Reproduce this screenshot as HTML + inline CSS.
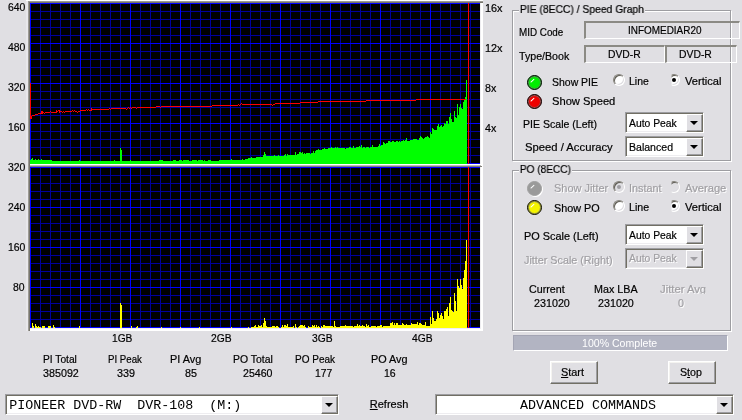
<!DOCTYPE html>
<html><head><meta charset="utf-8"><title>PIE / PO Scan</title>
<style>
html,body{margin:0;padding:0;}
body{width:742px;height:420px;overflow:hidden;background:#e0dfe3;position:relative;font-family:"Liberation Sans",sans-serif;font-size:11px;color:#000;}
.graph{position:absolute;left:0;top:0;}
.txt{position:absolute;left:0;top:0;width:742px;height:420px;will-change:transform;}
.t{-webkit-text-stroke:0.2px currentColor;position:absolute;white-space:nowrap;line-height:13px;height:13px;transform-origin:0 0;font-size:11px;}
.t.dis{color:#a09fa3;text-shadow:1px 1px 0 #fff;}
.m{position:absolute;white-space:pre;font-family:"Liberation Mono",monospace;font-size:13.33px;line-height:14px;}
.gb{position:absolute;border:1px solid #9d9da1;box-shadow:1px 1px 0 #fff, inset 1px 1px 0 #fff;box-sizing:border-box;}
.field{position:absolute;box-sizing:border-box;border-top:2px solid #8b8a84;border-left:2px solid #8b8a84;border-bottom:1px solid #fff;border-right:1px solid #fff;}
.combo{position:absolute;box-sizing:border-box;background:#fff;border:1px solid;border-color:#9d9da1 #fff #fff #9d9da1;box-shadow:inset 1px 1px 0 #716f64, inset -1px -1px 0 #eeedf0;padding:1px;}
.combo.dis{background:#e0dfe3;}
.cbtn{position:absolute;right:0;top:1px;bottom:0;width:17px;background:#e0dfe3;box-sizing:border-box;border:1px solid;border-color:#fff #716f64 #716f64 #fff;box-shadow:inset -1px -1px 0 #9d9da1;}
.cbtn i{position:absolute;left:3.4px;top:6px;width:0;height:0;border-left:4px solid transparent;border-right:4px solid transparent;border-top:4.4px solid #000;}
.combo.dis .cbtn i{border-top-color:#a09fa3;}
.btn{position:absolute;box-sizing:border-box;background:#e0dfe3;border:1px solid;border-color:#fff #716f64 #716f64 #fff;box-shadow:inset -1px -1px 0 #9d9da1, inset 1px 1px 0 #f4f3f0;}
.led{position:absolute;width:15px;height:15px;border-radius:50%;box-sizing:border-box;border:1.5px solid #000;box-shadow:inset 0 0 0 1px rgba(110,110,110,.8);}
.led i{position:absolute;left:1.7px;top:4.6px;width:5.4px;height:1.4px;background:#fff;transform:rotate(-42deg);transform-origin:50% 50%;border-radius:1px;}
.led.ledd{border-color:#a0a0a0;box-shadow:1px 1px 0 #fff;}
.radio{position:absolute;width:12px;height:12px;border-radius:50%;box-sizing:border-box;background:#fff;border:1px solid;border-color:#85837c #fff #fff #85837c;box-shadow:inset 1px 1px 0 #5f5d55, inset -1px -1px 0 #dddce0;}
.radio.rdis{background:#e0dfe3;}
.radio i{position:absolute;left:3px;top:3px;width:4px;height:4px;border-radius:50%;background:#000;}
.radio.rdis i{background:#a09fa3;}
.radio.rclip{clip-path:inset(0 0 0 3.6px);}
.prog{position:absolute;left:513px;top:335px;width:215px;height:16px;background:#b2b4c2;box-sizing:border-box;border-bottom:1px solid #fff;border-right:1px solid #fff;border-top:1px solid #a4a5b4;border-left:1px solid #a4a5b4;}
u{text-decoration:underline;text-underline-offset:1px;}
</style></head><body>
<svg class="graph" width="742" height="335" viewBox="0 0 742 335" shape-rendering="crispEdges"><rect x="26" y="0" width="457" height="1" fill="#fff"/><rect x="26" y="1" width="2" height="330" fill="#e8e7eb"/><rect x="28" y="1" width="455" height="330" fill="#9c9a94"/><rect x="29" y="2" width="454" height="329" fill="#77756c"/><rect x="30" y="3" width="453" height="328" fill="#fff"/><rect x="30" y="3" width="451" height="326" fill="#efeef1"/><rect x="30" y="3" width="450" height="161" fill="#000"/><rect x="30" y="164" width="451" height="1" fill="#fff"/><rect x="30" y="165" width="451" height="1" fill="#bdbcba"/><rect x="30" y="166" width="452" height="1" fill="#807e78"/><rect x="30" y="167" width="450" height="161" fill="#000"/><path d="M40.5 3V164M50.5 3V164M60.5 3V164M70.5 3V164M90.5 3V164M100.5 3V164M110.5 3V164M120.5 3V164M140.5 3V164M150.5 3V164M160.5 3V164M170.5 3V164M190.5 3V164M200.5 3V164M210.5 3V164M220.5 3V164M240.5 3V164M250.5 3V164M260.5 3V164M270.5 3V164M290.5 3V164M300.5 3V164M310.5 3V164M320.5 3V164M340.5 3V164M350.5 3V164M360.5 3V164M370.5 3V164M390.5 3V164M400.5 3V164M410.5 3V164M420.5 3V164M440.5 3V164M450.5 3V164M460.5 3V164M470.5 3V164M30 11.5H480M30 19.5H480M30 27.5H480M30 35.5H480M30 51.5H480M30 59.5H480M30 67.5H480M30 75.5H480M30 91.5H480M30 99.5H480M30 107.5H480M30 115.5H480M30 131.5H480M30 139.5H480M30 147.5H480M30 155.5H480" stroke="#00009c" stroke-width="1" fill="none"/><path d="M30.5 3V164M80.5 3V164M130.5 3V164M180.5 3V164M230.5 3V164M280.5 3V164M330.5 3V164M380.5 3V164M430.5 3V164M30 3.5H480M30 43.5H480M30 83.5H480M30 123.5H480M30 163.5H480" stroke="#0000ff" stroke-width="1" fill="none"/><path d="M40.5 167V328M50.5 167V328M60.5 167V328M70.5 167V328M90.5 167V328M100.5 167V328M110.5 167V328M120.5 167V328M140.5 167V328M150.5 167V328M160.5 167V328M170.5 167V328M190.5 167V328M200.5 167V328M210.5 167V328M220.5 167V328M240.5 167V328M250.5 167V328M260.5 167V328M270.5 167V328M290.5 167V328M300.5 167V328M310.5 167V328M320.5 167V328M340.5 167V328M350.5 167V328M360.5 167V328M370.5 167V328M390.5 167V328M400.5 167V328M410.5 167V328M420.5 167V328M440.5 167V328M450.5 167V328M460.5 167V328M470.5 167V328M30 175.5H480M30 183.5H480M30 191.5H480M30 199.5H480M30 215.5H480M30 223.5H480M30 231.5H480M30 239.5H480M30 255.5H480M30 263.5H480M30 271.5H480M30 279.5H480M30 295.5H480M30 303.5H480M30 311.5H480M30 319.5H480" stroke="#00009c" stroke-width="1" fill="none"/><path d="M30.5 167V328M80.5 167V328M130.5 167V328M180.5 167V328M230.5 167V328M280.5 167V328M330.5 167V328M380.5 167V328M430.5 167V328M30 167.5H480M30 207.5H480M30 247.5H480M30 287.5H480M30 327.5H480" stroke="#0000ff" stroke-width="1" fill="none"/><path d="M30.5 164V160M31.5 164V159M32.5 164V158M33.5 164V160M34.5 164V160M35.5 164V159M36.5 164V160M37.5 164V160M38.5 164V159M39.5 164V160M40.5 164V160M41.5 164V159M42.5 164V160M43.5 164V160M44.5 164V160M45.5 164V160M46.5 164V160M47.5 164V160M48.5 164V160M49.5 164V160M50.5 164V160M51.5 164V160M52.5 164V161M53.5 164V161M54.5 164V161M55.5 164V161M56.5 164V161M57.5 164V161M58.5 164V161M59.5 164V161M60.5 164V161M61.5 164V161M62.5 164V161M63.5 164V161M64.5 164V161M65.5 164V161M66.5 164V161M67.5 164V161M68.5 164V161M69.5 164V161M70.5 164V161M71.5 164V161M72.5 164V161M73.5 164V161M74.5 164V161M75.5 164V161M76.5 164V161M77.5 164V161M78.5 164V161M79.5 164V160M80.5 164V161M81.5 164V161M82.5 164V161M83.5 164V161M84.5 164V161M85.5 164V161M86.5 164V161M87.5 164V161M88.5 164V161M89.5 164V161M90.5 164V161M91.5 164V161M92.5 164V161M93.5 164V161M94.5 164V161M95.5 164V161M96.5 164V161M97.5 164V161M98.5 164V161M99.5 164V161M100.5 164V161M101.5 164V161M102.5 164V161M103.5 164V161M104.5 164V161M105.5 164V161M106.5 164V161M107.5 164V161M108.5 164V161M109.5 164V161M110.5 164V161M111.5 164V161M112.5 164V161M113.5 164V161M114.5 164V160M115.5 164V161M116.5 164V161M117.5 164V161M118.5 164V161M119.5 164V161M120.5 164V148M121.5 164V150M122.5 164V161M123.5 164V161M124.5 164V161M125.5 164V161M126.5 164V161M127.5 164V161M128.5 164V161M129.5 164V161M130.5 164V160M131.5 164V161M132.5 164V161M133.5 164V161M134.5 164V161M135.5 164V161M136.5 164V161M137.5 164V161M138.5 164V161M139.5 164V161M140.5 164V161M141.5 164V161M142.5 164V161M143.5 164V161M144.5 164V161M145.5 164V161M146.5 164V161M147.5 164V161M148.5 164V161M149.5 164V161M150.5 164V161M151.5 164V161M152.5 164V161M153.5 164V161M154.5 164V161M155.5 164V161M156.5 164V161M157.5 164V161M158.5 164V161M159.5 164V160M160.5 164V160M161.5 164V160M162.5 164V160M163.5 164V161M164.5 164V161M165.5 164V161M166.5 164V161M167.5 164V161M168.5 164V161M169.5 164V161M170.5 164V161M171.5 164V161M172.5 164V161M173.5 164V160M174.5 164V160M175.5 164V160M176.5 164V161M177.5 164V161M178.5 164V161M179.5 164V160M180.5 164V160M181.5 164V160M182.5 164V161M183.5 164V160M184.5 164V160M185.5 164V160M186.5 164V160M187.5 164V160M188.5 164V160M189.5 164V161M190.5 164V161M191.5 164V161M192.5 164V160M193.5 164V160M194.5 164V160M195.5 164V160M196.5 164V160M197.5 164V161M198.5 164V160M199.5 164V160M200.5 164V160M201.5 164V160M202.5 164V160M203.5 164V161M204.5 164V160M205.5 164V161M206.5 164V161M207.5 164V161M208.5 164V160M209.5 164V160M210.5 164V160M211.5 164V161M212.5 164V161M213.5 164V161M214.5 164V161M215.5 164V161M216.5 164V161M217.5 164V161M218.5 164V161M219.5 164V160M220.5 164V160M221.5 164V160M222.5 164V160M223.5 164V160M224.5 164V160M225.5 164V160M226.5 164V160M227.5 164V160M228.5 164V160M229.5 164V160M230.5 164V160M231.5 164V159M232.5 164V160M233.5 164V160M234.5 164V160M235.5 164V160M236.5 164V160M237.5 164V160M238.5 164V160M239.5 164V160M240.5 164V160M241.5 164V160M242.5 164V159M243.5 164V160M244.5 164V160M245.5 164V159M246.5 164V159M247.5 164V159M248.5 164V158M249.5 164V158M250.5 164V158M251.5 164V157M252.5 164V158M253.5 164V158M254.5 164V158M255.5 164V158M256.5 164V157M257.5 164V157M258.5 164V157M259.5 164V157M260.5 164V157M261.5 164V157M262.5 164V157M263.5 164V155M264.5 164V152M265.5 164V154M266.5 164V156M267.5 164V156M268.5 164V156M269.5 164V156M270.5 164V156M271.5 164V156M272.5 164V156M273.5 164V156M274.5 164V155M275.5 164V156M276.5 164V156M277.5 164V156M278.5 164V155M279.5 164V156M280.5 164V156M281.5 164V156M282.5 164V156M283.5 164V156M284.5 164V155M285.5 164V154M286.5 164V156M287.5 164V154M288.5 164V155M289.5 164V155M290.5 164V155M291.5 164V155M292.5 164V155M293.5 164V155M294.5 164V155M295.5 164V152M296.5 164V155M297.5 164V154M298.5 164V154M299.5 164V152M300.5 164V152M301.5 164V153M302.5 164V152M303.5 164V154M304.5 164V153M305.5 164V154M306.5 164V153M307.5 164V153M308.5 164V153M309.5 164V153M310.5 164V154M311.5 164V153M312.5 164V153M313.5 164V151M314.5 164V153M315.5 164V151M316.5 164V150M317.5 164V150M318.5 164V149M319.5 164V150M320.5 164V150M321.5 164V150M322.5 164V149M323.5 164V149M324.5 164V148M325.5 164V149M326.5 164V149M327.5 164V149M328.5 164V148M329.5 164V148M330.5 164V148M331.5 164V147M332.5 164V148M333.5 164V148M334.5 164V148M335.5 164V147M336.5 164V148M337.5 164V147M338.5 164V148M339.5 164V148M340.5 164V148M341.5 164V148M342.5 164V148M343.5 164V148M344.5 164V148M345.5 164V149M346.5 164V148M347.5 164V148M348.5 164V148M349.5 164V147M350.5 164V147M351.5 164V148M352.5 164V148M353.5 164V146M354.5 164V148M355.5 164V148M356.5 164V147M357.5 164V147M358.5 164V147M359.5 164V146M360.5 164V147M361.5 164V145M362.5 164V148M363.5 164V147M364.5 164V147M365.5 164V148M366.5 164V147M367.5 164V147M368.5 164V147M369.5 164V148M370.5 164V147M371.5 164V147M372.5 164V145M373.5 164V147M374.5 164V147M375.5 164V147M376.5 164V147M377.5 164V147M378.5 164V146M379.5 164V144M380.5 164V146M381.5 164V145M382.5 164V145M383.5 164V142M384.5 164V143M385.5 164V144M386.5 164V143M387.5 164V143M388.5 164V141M389.5 164V141M390.5 164V142M391.5 164V142M392.5 164V141M393.5 164V141M394.5 164V142M395.5 164V142M396.5 164V141M397.5 164V141M398.5 164V142M399.5 164V141M400.5 164V142M401.5 164V141M402.5 164V141M403.5 164V140M404.5 164V141M405.5 164V140M406.5 164V138M407.5 164V141M408.5 164V141M409.5 164V141M410.5 164V140M411.5 164V140M412.5 164V140M413.5 164V139M414.5 164V139M415.5 164V139M416.5 164V139M417.5 164V140M418.5 164V140M419.5 164V138M420.5 164V136M421.5 164V137M422.5 164V138M423.5 164V139M424.5 164V138M425.5 164V137M426.5 164V137M427.5 164V136M428.5 164V137M429.5 164V138M430.5 164V132M431.5 164V134M432.5 164V128M433.5 164V129M434.5 164V130M435.5 164V130M436.5 164V130M437.5 164V126M438.5 164V124M439.5 164V127M440.5 164V126M441.5 164V125M442.5 164V127M443.5 164V126M444.5 164V123M445.5 164V124M446.5 164V121M447.5 164V121M448.5 164V124M449.5 164V117M450.5 164V113M451.5 164V119M452.5 164V122M453.5 164V122M454.5 164V111M455.5 164V117M456.5 164V118M457.5 164V104M458.5 164V115M459.5 164V107M460.5 164V104M461.5 164V108M462.5 164V109M463.5 164V102M464.5 164V100M465.5 164V97M466.5 164V80" stroke="#00ff00" stroke-width="1" fill="none"/><path d="M32.5 328V323M33.5 328V326M35.5 328V324M36.5 328V326M37.5 328V327M38.5 328V326M39.5 328V327M40.5 328V327M42.5 328V326M43.5 328V326M44.5 328V326M48.5 328V326M49.5 328V326M50.5 328V326M53.5 328V325M54.5 328V327M79.5 328V326M120.5 328V303M121.5 328V305M131.5 328V326M136.5 328V327M137.5 328V326M161.5 328V327M180.5 328V327M199.5 328V327M231.5 328V327M248.5 328V327M251.5 328V327M252.5 328V327M253.5 328V327M254.5 328V326M255.5 328V325M256.5 328V327M257.5 328V327M258.5 328V325M259.5 328V326M260.5 328V326M261.5 328V325M262.5 328V327M263.5 328V323M264.5 328V318M265.5 328V321M266.5 328V326M267.5 328V327M268.5 328V327M269.5 328V327M270.5 328V327M271.5 328V327M272.5 328V326M273.5 328V326M274.5 328V326M275.5 328V327M276.5 328V326M277.5 328V326M278.5 328V327M281.5 328V327M282.5 328V325M283.5 328V327M284.5 328V325M285.5 328V325M286.5 328V326M287.5 328V324M288.5 328V327M289.5 328V327M290.5 328V327M291.5 328V327M292.5 328V327M293.5 328V326M295.5 328V324M296.5 328V327M298.5 328V327M299.5 328V326M300.5 328V325M301.5 328V325M302.5 328V325M303.5 328V326M304.5 328V325M305.5 328V327M308.5 328V326M309.5 328V327M310.5 328V327M311.5 328V327M312.5 328V325M313.5 328V326M314.5 328V325M315.5 328V327M316.5 328V325M317.5 328V327M318.5 328V326M319.5 328V327M321.5 328V326M322.5 328V327M323.5 328V325M324.5 328V325M325.5 328V326M326.5 328V326M327.5 328V326M328.5 328V326M329.5 328V326M330.5 328V326M331.5 328V326M332.5 328V326M333.5 328V327M334.5 328V321M335.5 328V326M336.5 328V327M337.5 328V327M338.5 328V327M339.5 328V327M340.5 328V326M341.5 328V326M342.5 328V326M343.5 328V326M344.5 328V326M345.5 328V325M346.5 328V326M347.5 328V326M348.5 328V326M349.5 328V326M350.5 328V326M351.5 328V326M352.5 328V326M353.5 328V327M354.5 328V326M355.5 328V326M356.5 328V326M357.5 328V324M358.5 328V326M359.5 328V325M360.5 328V326M361.5 328V326M362.5 328V325M363.5 328V326M364.5 328V326M365.5 328V327M366.5 328V324M367.5 328V326M368.5 328V325M369.5 328V327M370.5 328V327M371.5 328V326M372.5 328V326M373.5 328V326M374.5 328V326M375.5 328V326M376.5 328V327M377.5 328V326M378.5 328V326M379.5 328V326M380.5 328V325M381.5 328V325M382.5 328V327M383.5 328V326M384.5 328V326M385.5 328V326M386.5 328V326M387.5 328V326M388.5 328V326M389.5 328V326M390.5 328V323M391.5 328V323M392.5 328V322M393.5 328V325M394.5 328V323M395.5 328V325M396.5 328V323M397.5 328V323M398.5 328V325M399.5 328V325M400.5 328V325M401.5 328V325M402.5 328V323M403.5 328V324M404.5 328V325M405.5 328V325M406.5 328V324M407.5 328V325M408.5 328V325M409.5 328V325M410.5 328V325M411.5 328V323M412.5 328V324M413.5 328V324M414.5 328V324M415.5 328V324M416.5 328V324M417.5 328V322M418.5 328V325M419.5 328V323M420.5 328V323M421.5 328V324M422.5 328V325M423.5 328V325M424.5 328V325M425.5 328V322M426.5 328V326M427.5 328V326M428.5 328V326M429.5 328V326M430.5 328V317M431.5 328V324M432.5 328V311M433.5 328V318M434.5 328V321M435.5 328V321M436.5 328V319M437.5 328V311M438.5 328V313M439.5 328V318M440.5 328V315M441.5 328V313M442.5 328V316M443.5 328V319M444.5 328V311M445.5 328V311M446.5 328V309M447.5 328V307M448.5 328V316M449.5 328V303M450.5 328V297M451.5 328V310M452.5 328V311M453.5 328V312M454.5 328V293M455.5 328V301M456.5 328V311M457.5 328V279M458.5 328V286M459.5 328V288M460.5 328V279M461.5 328V285M462.5 328V289M463.5 328V278M464.5 328V270M465.5 328V261M466.5 328V240" stroke="#ffff00" stroke-width="1" fill="none"/><path d="M30.5 83V119" stroke="#ff0000" stroke-width="1"/><path d="M30 118.5h1M31.5 116V119M31 116.5h1M32 115.5h1M33 115.5h1M34 115.5h1M35 114.5h1M36 114.5h1M37 114.5h1M38 113.5h1M39 113.5h1M40 113.5h1M41.5 111V114M41 111.5h1M42.5 111V114M42 113.5h1M43 112.5h1M44 113.5h1M45 112.5h1M46 112.5h1M47 112.5h1M48 112.5h1M49 112.5h1M50 111.5h1M51 112.5h1M52 112.5h1M53 112.5h1M54 112.5h1M55 112.5h1M56.5 110V113M56 110.5h1M57 111.5h1M58 110.5h1M59.5 110V113M59 112.5h1M60 111.5h1M61 111.5h1M62 112.5h1M63 111.5h1M64 112.5h1M65 111.5h1M66 111.5h1M67 111.5h1M68 111.5h1M69 111.5h1M70 111.5h1M71 111.5h1M72 110.5h1M73 111.5h1M74 110.5h1M75 111.5h1M76 111.5h1M77 112.5h1M78 111.5h1M79 111.5h1M80 110.5h1M81 110.5h1M82 110.5h1M83 110.5h1M84 110.5h1M85 110.5h1M86 109.5h1M87 110.5h1M88 109.5h1M89 110.5h1M90 110.5h1M91.5 108V111M91 108.5h1M92 109.5h1M93 109.5h1M94 109.5h1M95 109.5h1M96 109.5h1M97 109.5h1M98 109.5h1M99 109.5h1M100 109.5h1M101 109.5h1M102 109.5h1M103 109.5h1M104 109.5h1M105 109.5h1M106 109.5h1M107 109.5h1M108 109.5h1M109 108.5h1M110 109.5h1M111 108.5h1M112 108.5h1M113 108.5h1M114 108.5h1M115 108.5h1M116 108.5h1M117 108.5h1M118 108.5h1M119 108.5h1M120 108.5h1M121 108.5h1M122 108.5h1M123 108.5h1M124 108.5h1M125 108.5h1M126 109.5h1M127 108.5h1M128 107.5h1M129 108.5h1M130 107.5h1M131 108.5h1M132 107.5h1M133 107.5h1M134 107.5h1M135 107.5h1M136 108.5h1M137 107.5h1M138 107.5h1M139 107.5h1M140 107.5h1M141 107.5h1M142 107.5h1M143 107.5h1M144 107.5h1M145 107.5h1M146 107.5h1M147 107.5h1M148 107.5h1M149 107.5h1M150 107.5h1M151 107.5h1M152 107.5h1M153 107.5h1M154 107.5h1M155 107.5h1M156 106.5h1M157 106.5h1M158 106.5h1M159 106.5h1M160 107.5h1M161 106.5h1M162 106.5h1M163 106.5h1M164 106.5h1M165 106.5h1M166 106.5h1M167 106.5h1M168 106.5h1M169 106.5h1M170 106.5h1M171 106.5h1M172 106.5h1M173 106.5h1M174 106.5h1M175 106.5h1M176 106.5h1M177 106.5h1M178 106.5h1M179 106.5h1M180 106.5h1M181 106.5h1M182 106.5h1M183 106.5h1M184 106.5h1M185 106.5h1M186 106.5h1M187 106.5h1M188 106.5h1M189 106.5h1M190 106.5h1M191 106.5h1M192 106.5h1M193 106.5h1M194 106.5h1M195 106.5h1M196 106.5h1M197 106.5h1M198 106.5h1M199 106.5h1M200 106.5h1M201 106.5h1M202 106.5h1M203 106.5h1M204 106.5h1M205 106.5h1M206 106.5h1M207 106.5h1M208 106.5h1M209 106.5h1M210 106.5h1M211 106.5h1M212 105.5h1M213 105.5h1M214 105.5h1M215 105.5h1M216 105.5h1M217 105.5h1M218 105.5h1M219 105.5h1M220 105.5h1M221 105.5h1M222 105.5h1M223 105.5h1M224 105.5h1M225 105.5h1M226 105.5h1M227 105.5h1M228 105.5h1M229 105.5h1M230 105.5h1M231 105.5h1M232 105.5h1M233 105.5h1M234 105.5h1M235 105.5h1M236 105.5h1M237 105.5h1M238 104.5h1M239 105.5h1M240 104.5h1M241 103.5h1M242 104.5h1M243 104.5h1M244 104.5h1M245 104.5h1M246 104.5h1M247 104.5h1M248 104.5h1M249 104.5h1M250 104.5h1M251 104.5h1M252 104.5h1M253 104.5h1M254 104.5h1M255 104.5h1M256 104.5h1M257 104.5h1M258 104.5h1M259 104.5h1M260 104.5h1M261 104.5h1M262 104.5h1M263 104.5h1M264 104.5h1M265 104.5h1M266 104.5h1M267 104.5h1M268 104.5h1M269 104.5h1M270 104.5h1M271 104.5h1M272 105.5h1M273 104.5h1M274 104.5h1M275 103.5h1M276 103.5h1M277 103.5h1M278 103.5h1M279 103.5h1M280 103.5h1M281 103.5h1M282 103.5h1M283 103.5h1M284 103.5h1M285 103.5h1M286 103.5h1M287 103.5h1M288 103.5h1M289 103.5h1M290 103.5h1M291 103.5h1M292 103.5h1M293 103.5h1M294 103.5h1M295 103.5h1M296 103.5h1M297 103.5h1M298 103.5h1M299 103.5h1M300 102.5h1M301 102.5h1M302 102.5h1M303 102.5h1M304 102.5h1M305 102.5h1M306 102.5h1M307 102.5h1M308 102.5h1M309 102.5h1M310 102.5h1M311 102.5h1M312 102.5h1M313 102.5h1M314 102.5h1M315 102.5h1M316 102.5h1M317 102.5h1M318 101.5h1M319 101.5h1M320 101.5h1M321 101.5h1M322 101.5h1M323 101.5h1M324 101.5h1M325 101.5h1M326 101.5h1M327 101.5h1M328 101.5h1M329 101.5h1M330 101.5h1M331 101.5h1M332 101.5h1M333 101.5h1M334 101.5h1M335 101.5h1M336 101.5h1M337 101.5h1M338 101.5h1M339 101.5h1M340 101.5h1M341 101.5h1M342 101.5h1M343 101.5h1M344 101.5h1M345 101.5h1M346 101.5h1M347 101.5h1M348 101.5h1M349 101.5h1M350 101.5h1M351 101.5h1M352 101.5h1M353 101.5h1M354 101.5h1M355 101.5h1M356 101.5h1M357 101.5h1M358 101.5h1M359 101.5h1M360 101.5h1M361 101.5h1M362 101.5h1M363 101.5h1M364 101.5h1M365 101.5h1M366 100.5h1M367 100.5h1M368 100.5h1M369 100.5h1M370 100.5h1M371 100.5h1M372 100.5h1M373 100.5h1M374 100.5h1M375 100.5h1M376 100.5h1M377 100.5h1M378 100.5h1M379 100.5h1M380 100.5h1M381 100.5h1M382 100.5h1M383 100.5h1M384 100.5h1M385 100.5h1M386 100.5h1M387 100.5h1M388 100.5h1M389 100.5h1M390 100.5h1M391 100.5h1M392 100.5h1M393 100.5h1M394 100.5h1M395 100.5h1M396 100.5h1M397 100.5h1M398 100.5h1M399 100.5h1M400 100.5h1M401 100.5h1M402 100.5h1M403 100.5h1M404 100.5h1M405 100.5h1M406 100.5h1M407 100.5h1M408 100.5h1M409 100.5h1M410 100.5h1M411 100.5h1M412 100.5h1M413 100.5h1M414 100.5h1M415 100.5h1M416 99.5h1M417 99.5h1M418 99.5h1M419 99.5h1M420 99.5h1M421 99.5h1M422 99.5h1M423 99.5h1M424 99.5h1M425 99.5h1M426 99.5h1M427 99.5h1M428 99.5h1M429 99.5h1M430 99.5h1M431 99.5h1M432 99.5h1M433 99.5h1M434 99.5h1M435 99.5h1M436 99.5h1M437 99.5h1M438 99.5h1M439 99.5h1M440 99.5h1M441 99.5h1M442 99.5h1M443 99.5h1M444 99.5h1M445 99.5h1M446 99.5h1M447 99.5h1M448 99.5h1M449 99.5h1M450 99.5h1M451 99.5h1M452 99.5h1M453 99.5h1M454 99.5h1M455 99.5h1M456 99.5h1M457 99.5h1M458 99.5h1M459 99.5h1M460 99.5h1M461 99.5h1M462 99.5h1M463 99.5h1M464 99.5h1M465 99.5h1" stroke="#ff0000" stroke-width="1" fill="none"/><path d="M468.5 3V164M468.5 167V328" stroke="#ff0000" stroke-width="1"/></svg>
<div class="gb" style="left:512px;top:10px;width:219px;height:151px"></div>
<div class="gb" style="left:512px;top:170px;width:219px;height:161px"></div>
<div class="field" style="left:584px;top:21px;width:156px;height:18px"></div>
<div class="field" style="left:584px;top:45px;width:81px;height:18px"></div>
<div class="field" style="left:665px;top:45px;width:72px;height:18px"></div>
<div class="prog"></div>
<div class="btn" style="left:550px;top:361px;width:48px;height:23px"></div>
<div class="btn" style="left:668px;top:361px;width:48px;height:23px"></div>
<div class="combo" style="left:625px;top:112px;width:79px;height:21px"><div class="cbtn"><i></i></div></div><div class="combo" style="left:625px;top:136px;width:79px;height:21px"><div class="cbtn"><i></i></div></div><div class="combo" style="left:625px;top:224px;width:79px;height:21px"><div class="cbtn"><i></i></div></div><div class="combo dis" style="left:625px;top:248px;width:79px;height:21px"><div class="cbtn"><i></i></div></div><div class="combo" style="left:5px;top:394px;width:334px;height:21px"><div class="cbtn"><i></i></div></div><div class="combo" style="left:435px;top:394px;width:299px;height:21px"><div class="cbtn"><i></i></div></div><div class="led" style="left:527.0px;top:74.7px;background:#00ee00"><i></i></div><div class="led" style="left:527.0px;top:93.8px;background:#ee0000"><i></i></div><div class="led ledd" style="left:527.0px;top:180.8px;background:#9a9a9a"><i></i></div><div class="led" style="left:527.0px;top:199.9px;background:#f4f400"><i></i></div><div class="radio" style="left:613px;top:74px"></div><div class="radio rclip" style="left:668px;top:74px"><i></i></div><div class="radio rdis" style="left:613px;top:181px"><i></i></div><div class="radio rdis rclip" style="left:668px;top:181px"></div><div class="radio" style="left:613px;top:200px"></div><div class="radio rclip" style="left:668px;top:200px"><i></i></div>
<div class="txt">
<span class="t " style="left:7.60px;top:1px;transform:scaleX(0.9469);">640</span><span class="t " style="left:7.60px;top:41px;transform:scaleX(0.9469);">480</span><span class="t " style="left:7.60px;top:81px;transform:scaleX(0.9469);">320</span><span class="t " style="left:7.60px;top:121px;transform:scaleX(0.9469);">160</span><span class="t " style="left:7.60px;top:161px;transform:scaleX(0.9469);">320</span><span class="t " style="left:7.60px;top:201px;transform:scaleX(0.9469);">240</span><span class="t " style="left:7.60px;top:241px;transform:scaleX(0.9469);">160</span><span class="t " style="left:13.40px;top:281px;transform:scaleX(0.9469);">80</span><span class="t " style="left:484.90px;top:2px;transform:scaleX(0.9859);">16x</span><span class="t " style="left:484.90px;top:42px;transform:scaleX(0.9859);">12x</span><span class="t " style="left:484.70px;top:82px;transform:scaleX(0.9720);">8x</span><span class="t " style="left:484.70px;top:122px;transform:scaleX(0.9720);">4x</span><span class="t " style="left:111.70px;top:332px;transform:scaleX(0.9273);">1GB</span><span class="t " style="left:211.40px;top:332px;transform:scaleX(0.9364);">2GB</span><span class="t " style="left:311.60px;top:332px;transform:scaleX(0.9364);">3GB</span><span class="t " style="left:411.70px;top:332px;transform:scaleX(0.9364);">4GB</span><span class="t " style="left:42.50px;top:353px;transform:scaleX(0.9288);">PI Total</span><span class="t " style="left:42.50px;top:367px;transform:scaleX(0.9758);">385092</span><span class="t " style="left:108.20px;top:353px;transform:scaleX(0.8791);">PI Peak</span><span class="t " style="left:117.30px;top:367px;transform:scaleX(0.9796);">339</span><span class="t " style="left:170.40px;top:353px;transform:scaleX(0.9897);">PI Avg</span><span class="t " style="left:185.30px;top:367px;transform:scaleX(0.9796);">85</span><span class="t " style="left:233.40px;top:353px;transform:scaleX(0.9476);">PO Total</span><span class="t " style="left:242.60px;top:367px;transform:scaleX(0.9652);">25460</span><span class="t " style="left:295.10px;top:353px;transform:scaleX(0.9101);">PO Peak</span><span class="t " style="left:314.70px;top:367px;transform:scaleX(0.9415);">177</span><span class="t " style="left:371.30px;top:353px;transform:scaleX(0.9859);">PO Avg</span><span class="t " style="left:383.60px;top:367px;transform:scaleX(0.9551);">16</span><span class="t " style="left:369.80px;top:398px;transform:scaleX(1.0000);"><u>R</u>efresh</span><span class="t " style="left:520.30px;top:3px;transform:scaleX(0.9389);background:#e0dfe3;padding:0 1px;margin-left:-1px;">PIE (8ECC) / Speed Graph</span><span class="t " style="left:518.50px;top:26px;transform:scaleX(0.8949);">MID Code</span><span class="t " style="left:627.90px;top:24px;transform:scaleX(0.9039);">INFOMEDIAR20</span><span class="t " style="left:518.70px;top:50px;transform:scaleX(0.9661);">Type/Book</span><span class="t " style="left:608.30px;top:48px;transform:scaleX(0.9393);">DVD-R</span><span class="t " style="left:679.20px;top:48px;transform:scaleX(0.9422);">DVD-R</span><span class="t " style="left:552.10px;top:76px;transform:scaleX(0.9521);">Show PIE</span><span class="t " style="left:629.10px;top:75px;transform:scaleX(0.9514);">Line</span><span class="t " style="left:685.00px;top:75px;transform:scaleX(1.0094);">Vertical</span><span class="t " style="left:552.10px;top:95px;transform:scaleX(1.0148);">Show Speed</span><span class="t " style="left:523.30px;top:118px;transform:scaleX(0.9603);">PIE Scale (Left)</span><span class="t " style="left:524.50px;top:141px;transform:scaleX(1.0242);">Speed / Accuracy</span><span class="t " style="left:629.20px;top:117px;transform:scaleX(0.9407);">Auto Peak</span><span class="t " style="left:629.20px;top:141px;transform:scaleX(0.9591);">Balanced</span><span class="t " style="left:520.40px;top:163px;transform:scaleX(0.9169);background:#e0dfe3;padding:0 1px;margin-left:-1px;">PO (8ECC)</span><span class="t dis" style="left:554.40px;top:182px;transform:scaleX(0.9956);">Show Jitter</span><span class="t dis" style="left:629.10px;top:182px;transform:scaleX(0.9818);">Instant</span><span class="t dis" style="left:685.00px;top:182px;transform:scaleX(1.0135);">Average</span><span class="t " style="left:554.40px;top:202px;transform:scaleX(0.9820);">Show PO</span><span class="t " style="left:629.10px;top:201px;transform:scaleX(0.9658);">Line</span><span class="t " style="left:685.00px;top:201px;transform:scaleX(1.0094);">Vertical</span><span class="t " style="left:524.10px;top:230px;transform:scaleX(0.9909);">PO Scale (Left)</span><span class="t dis" style="left:524.10px;top:254px;transform:scaleX(0.9790);">Jitter Scale (Right)</span><span class="t " style="left:629.20px;top:229px;transform:scaleX(0.9407);">Auto Peak</span><span class="t dis" style="left:629.20px;top:252px;transform:scaleX(0.9407);">Auto Peak</span><span class="t " style="left:529.30px;top:283px;transform:scaleX(0.9704);">Current</span><span class="t " style="left:533.50px;top:297px;transform:scaleX(0.9758);">231020</span><span class="t " style="left:594.30px;top:283px;transform:scaleX(0.9757);">Max LBA</span><span class="t " style="left:598.30px;top:297px;transform:scaleX(0.9758);">231020</span><span class="t dis" style="left:659.80px;top:283px;transform:scaleX(1.0230);clip-path:inset(0 0 2.2px 0);">Jitter Avg</span><span class="t dis" style="left:678.40px;top:297px;transform:scaleX(0.9633);">0</span><span class="t " style="left:581.60px;top:337px;transform:scaleX(0.9610);color:#fff;-webkit-text-stroke:0;">100% Complete</span><span class="t " style="left:561.40px;top:366px;transform:scaleX(0.9892);"><u>S</u>tart</span><span class="t " style="left:680.30px;top:366px;transform:scaleX(0.9680);">S<u>t</u>op</span>
<span class="m" style="left:9.3px;top:399px">PIONEER DVD-RW&nbsp; DVR-108&nbsp; (M:)</span><span class="m" style="left:520px;top:399px">ADVANCED COMMANDS</span>
</div>
</body></html>
